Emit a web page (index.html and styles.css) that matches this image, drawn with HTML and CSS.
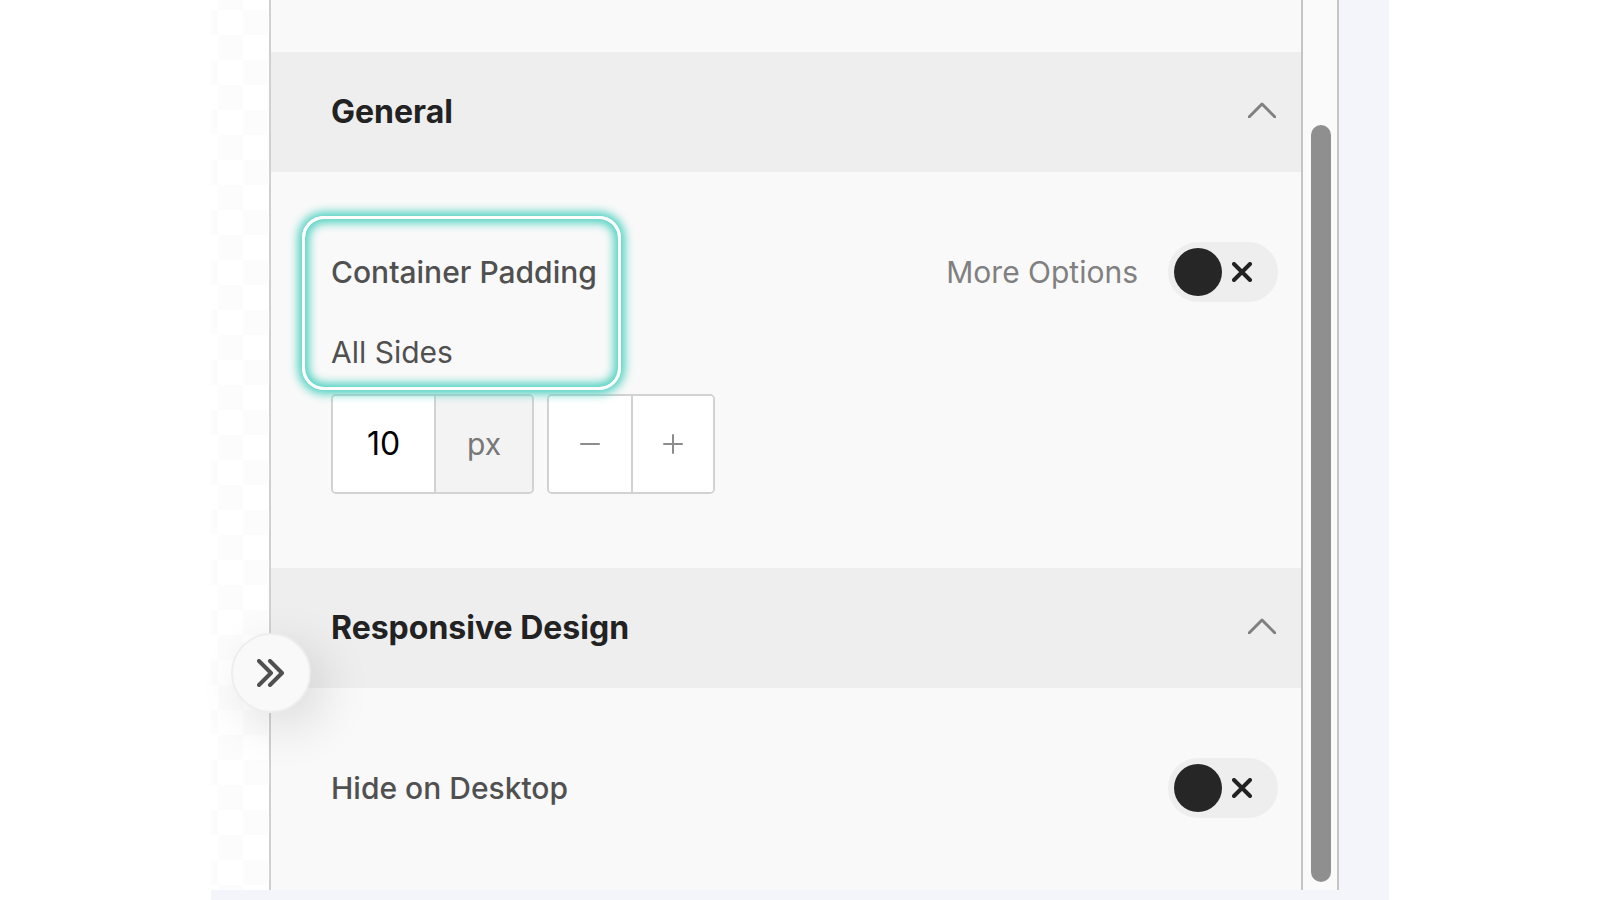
FILE: index.html
```
<!DOCTYPE html>
<html lang="en">
<head>
    <meta charset="UTF-8">
    <meta name="viewport" content="width=device-width, initial-scale=1.0">
    <title>Block Settings</title>
    <link rel="stylesheet" href="styles.css">
</head>
<body>
    <div class="editor">
        <div class="canvas"></div>

        <main class="panel">
            <button class="collapse-button" type="button" aria-label="Collapse panel">
                <svg width="28" height="28" viewBox="0 0 28 28">
                    <path d="M2 2L14 14L2 26M13 2L25 14L13 26"/>
                </svg>
            </button>

            <section>
                <button class="section-header" type="button">
                    General
                    <svg class="chevron" width="28" height="16" viewBox="0 0 28 16">
                        <path d="M1 15L14 2L27 15"/>
                    </svg>
                </button>
                <div class="section-body">
                    <div class="highlight"></div>
                    <div class="row">
                        <h3>Container Padding</h3>
                        <label class="more" for="moreOptions">More Options</label>
                        <span class="toggle">
                            <input type="checkbox" id="moreOptions">
                            <svg width="20" height="20" viewBox="0 0 20 20">
                                <path d="M2 2L18 18M18 2L2 18"/>
                            </svg>
                        </span>
                    </div>
                    <label class="side-label" for="allSides">All Sides</label>
                    <div class="controls">
                        <div class="group">
                            <input type="text" id="allSides" class="amount" value="10">
                            <span class="unit">px</span>
                        </div>
                        <div class="group">
                            <button class="step" type="button" aria-label="Decrease">
                                <svg width="20" height="20" viewBox="0 0 20 20"><path d="M1 10H19"/></svg>
                            </button>
                            <button class="step" type="button" aria-label="Increase">
                                <svg width="20" height="20" viewBox="0 0 20 20"><path d="M1 10H19M10 1V19"/></svg>
                            </button>
                        </div>
                    </div>
                </div>
            </section>

            <section>
                <button class="section-header" type="button">
                    Responsive Design
                    <svg class="chevron" width="28" height="16" viewBox="0 0 28 16">
                        <path d="M1 15L14 2L27 15"/>
                    </svg>
                </button>
                <div class="section-body last">
                    <div class="row">
                        <label class="row-label" for="hideDesktop">Hide on Desktop</label>
                        <span class="toggle">
                            <input type="checkbox" id="hideDesktop">
                            <svg width="20" height="20" viewBox="0 0 20 20">
                                <path d="M2 2L18 18M18 2L2 18"/>
                            </svg>
                        </span>
                    </div>
                </div>
            </section>
        </main>

        <div class="scroll-track">
            <div class="scroll-thumb"></div>
        </div>
    </div>
</body>
</html>
```

FILE: styles.css
```
* {
    box-sizing: border-box;
}
body {
    font-family: Inter, sans-serif;
    font-size: 30px;
    line-height: 36px;
    color: #505050;
    background-color: #fff;
    margin: 0;
    padding: 0 211px;
}
button, input {
    font: inherit;
    margin: 0;
}
svg {
    display: block;
    flex: none;
    fill: none;
    stroke: currentColor;
    stroke-width: 3;
    stroke-linecap: round;
    stroke-linejoin: round;
}
.editor {
    display: flex;
    min-height: 100vh;
    padding: 0 50px 10px 0;
    background-color: #f4f5fa;
}
/* transparent checkerboard behind the design */
.canvas {
    width: 58px;
    background: repeating-conic-gradient(#fff 0 25%, #fcfcfc 0 50%) 7px 35px / 50px 50px;
}
.panel {
    position: relative;
    flex: 1;
    padding-top: 52px;
    background-color: #f9f9f9;
    border-left: 2px solid #d0d0d0;
}
.section-header {
    display: flex;
    justify-content: space-between;
    align-items: center;
    width: 100%;
    height: 120px;
    padding: 0 25px 0 60px;
    border: none;
    background-color: #eee;
    color: #222;
    font-size: 32px;
    font-weight: 700;
    text-align: left;
    cursor: pointer;
}
.chevron {
    color: #808080;
    margin-bottom: 4px;
}
.section-body {
    position: relative;
    padding: 70px 23px 74px 60px;
}
.section-body.last {
    padding-bottom: 70px;
}
.row {
    display: flex;
    align-items: center;
    height: 60px;
}
.row h3, .row-label {
    margin: 0 auto 0 0;
    font-size: 30px;
    font-weight: 500;
}
.more {
    margin-right: 30px;
    color: #808080;
}
.toggle {
    position: relative;
    display: flex;
    align-items: center;
    justify-content: flex-end;
    width: 110px;
    height: 60px;
    padding-right: 26px;
    border-radius: 30px;
    background-color: #eee;
    color: #222;
}
.toggle input {
    appearance: none;
    width: 48px;
    height: 48px;
    margin-right: 10px;
    border-radius: 50%;
    background-color: #262626;
    cursor: pointer;
}
.toggle svg {
    stroke-width: 4;
}
.side-label {
    display: block;
    width: max-content;
    margin: 32px 0 24px;
}
.controls {
    display: flex;
    gap: 13px;
}
.group {
    display: flex;
    height: 100px;
    border: 2px solid #d2d2d2;
    border-radius: 5px;
    background-color: #fff;
    overflow: hidden;
}
.amount {
    width: 101px;
    padding: 0;
    border: none;
    background-color: #fff;
    color: #000;
    font-size: 32px;
    text-align: center;
}
.unit {
    display: flex;
    align-items: center;
    justify-content: center;
    width: 98px;
    border-left: 2px solid #d2d2d2;
    background-color: #f3f3f3;
    color: #777;
}
.step {
    display: flex;
    align-items: center;
    justify-content: center;
    width: 82px;
    padding: 0;
    border: none;
    background-color: #fff;
    color: #8c8c8c;
    cursor: pointer;
}
.step svg {
    stroke-width: 2;
}
.step + .step {
    border-left: 2px solid #d2d2d2;
}
/* glowing frame around the padding labels */
.highlight {
    position: absolute;
    top: 44px;
    left: 31px;
    z-index: 1;
    width: 319px;
    height: 174px;
    border: 3px solid #fff;
    border-radius: 22px;
    box-shadow: 0 0 10px 4px #4fd1c1, inset 0 0 10px 4px #4fd1c1;
    pointer-events: none;
}
.collapse-button {
    position: absolute;
    top: 633px;
    left: -40px;
    z-index: 1;
    display: flex;
    align-items: center;
    justify-content: center;
    width: 80px;
    height: 80px;
    padding: 0;
    border: 2px solid #eee;
    border-radius: 50%;
    background-color: #f9f9f9;
    color: #505050;
    box-shadow: 14px 14px 50px rgba(0, 0, 0, 0.12);
    cursor: pointer;
}
.collapse-button svg {
    stroke-width: 4;
}
.scroll-track {
    display: flex;
    width: 38px;
    padding: 125px 6px 8px 8px;
    border: solid #c4c4c4;
    border-width: 0 2px;
    background-color: #fafafa;
}
.scroll-thumb {
    flex: 1;
    border-radius: 10px;
    background-color: #8f8f8f;
}
```
